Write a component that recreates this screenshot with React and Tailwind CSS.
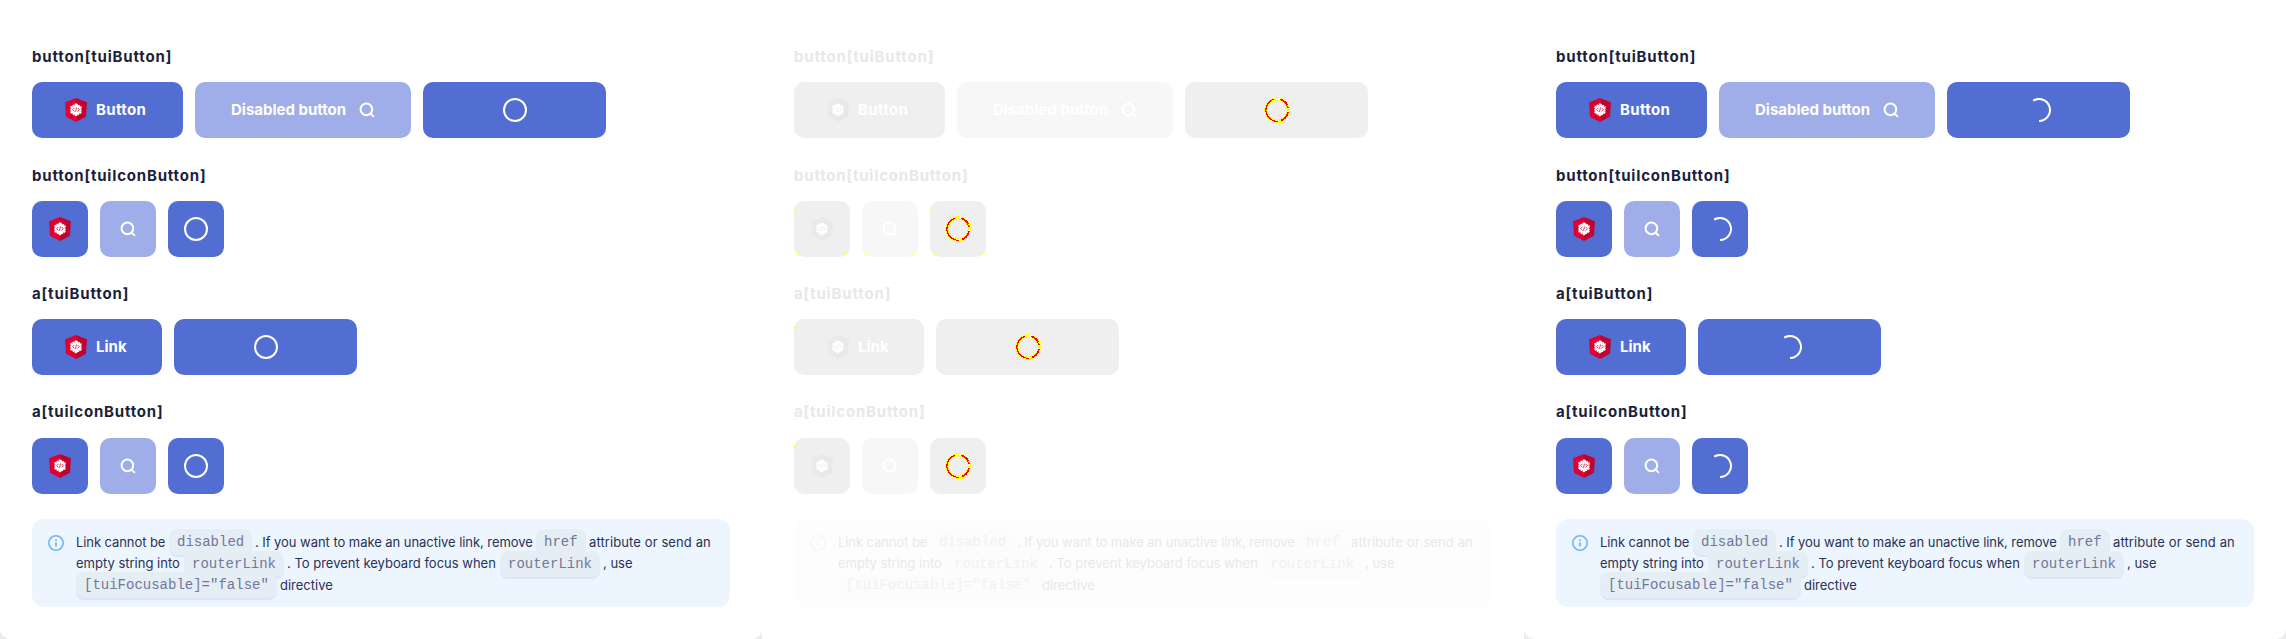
import React from "react";

const COLOR = {
  heading: "text-[#1b1f3b]",
  button: "bg-[#526ed3]",
  disabled: "bg-[#9faee8]",
  alert: "bg-[#edf6fe]",
  body: "text-[#2a3156]",
  code: "bg-[#e5edf5] text-[#71789a] shadow-[0_2px_0_#dbe6fd]",
  info: "#70b6f6",
  logoLeft: "#dd0031",
  logoRight: "#c3002f",
  logoMark: "#dd0031",
};

const GREY = {
  heading: "text-[#e8e8e8]",
  button: "bg-[#efefef]",
  disabled: "bg-[#f7f7f7]",
  alert: "bg-[#fdfdfd]",
  body: "text-[#e9e9e9]",
  code: "bg-[#fcfcfc] text-[#f1f1f1] shadow-[0_2px_0_#fbfbfb]",
  info: "#f6f6f6",
  logoLeft: "#eaeaea",
  logoRight: "#e8e8e8",
  logoMark: "#eaeaea",
};

function Logo({ c }) {
  return (
    <svg className="size-6 shrink-0" viewBox="0 0 24 24" fill="none">
      <path d="M12 0 1.1 4.2 2 18.8 12 24z" fill={c.logoLeft} />
      <path d="M12 0l10.9 4.2-.9 14.6L12 24z" fill={c.logoRight} />
      <path d="M12 6.3 16.6 8.9v5.6L12 17.3 7.4 14.5V8.9z" fill="#fff" stroke="#fff" strokeWidth="2" strokeDasharray="2 .6" />
      <path d="M10.4 9.9 8.6 11.7l1.8 1.8M13.6 9.9l1.8 1.8-1.8 1.8M12.5 9.6l-1 4.2" stroke={c.logoMark} strokeWidth=".8" />
    </svg>
  );
}

function Search() {
  return (
    <svg className="size-6 shrink-0" viewBox="0 0 24 24" fill="none" stroke="#fff" strokeWidth="2">
      <circle cx="11.4" cy="11.4" r="5.8" />
      <path d="M15.3 15.3 18.9 18.9" />
    </svg>
  );
}

function Loader({ kind }) {
  if (kind === "diff") {
    return (
      <svg className="size-7 shrink-0" viewBox="0 0 28 28" fill="none" shapeRendering="crispEdges">
        <circle cx="14" cy="14" r="11.2" stroke="#ffff00" strokeWidth="3" />
        <path d="M11 3.2A11.2 11.2 0 0 0 12 25" stroke="#ff0000" strokeWidth="1.3" />
        <path d="M12 25h4" stroke="#ff0000" strokeWidth="1" />
        <path d="M17.5 3.4A11.2 11.2 0 0 1 25 12" stroke="#ff0000" strokeWidth="1.8" />
        <path d="M24.9 16A11.2 11.2 0 0 1 18 24.5" stroke="#ff0000" strokeWidth="1.8" />
        <path d="M9 2h3M24 9h3M16 26h4" stroke="#ffff00" strokeWidth="1" />
        <path d="M12.5 3.2h1.5M15 3.2h2M25.2 12.4v1M25.2 14.6v1.2M14.5 24.8h1" stroke="#fff" strokeWidth="1.6" />
      </svg>
    );
  }
  return (
    <svg className="size-6 shrink-0" viewBox="0 0 24 24" fill="none" stroke="#fff" strokeWidth="2">
      {kind === "full" ? <circle cx="12" cy="12" r="11" /> : <path d="M6.2 2.65A11 11 0 1 1 12 23" />}
    </svg>
  );
}

const box = "flex h-14 shrink-0 items-center rounded-[10px] text-[15px] font-bold text-white";

function Speck({ at }) {
  return <i className={`absolute bg-[#ffff00] ${at}`} />;
}

function IconRow({ c, kind, bottomSpecks }) {
  const diff = kind === "diff";
  const bottom = diff && bottomSpecks && (
    <>
      <Speck at="bottom-[2px] left-[3px] h-px w-[2px]" />
      <Speck at="bottom-[2px] right-[3px] h-px w-[2px]" />
    </>
  );
  return (
    <div className="flex gap-3">
      <div className={`${box} ${c.button} relative w-14 justify-center`}>
        <Logo c={c} />
        {diff && <Speck at="left-0 top-2 h-[2px] w-px" />}
        {bottom}
      </div>
      <div className={`${box} ${c.disabled} relative w-14 justify-center`}>
        <Search />
        {bottom}
      </div>
      <div className={`${box} ${c.button} relative w-14 justify-center`}>
        <Loader kind={kind} />
        {diff && bottomSpecks && <Speck at="left-0 top-2 h-[2px] w-px" />}
        {bottom}
      </div>
    </div>
  );
}

function Section({ c, title, tracking, className, gap = "mb-[13px]", children }) {
  return (
    <section className={className}>
      <h3 className={`h-6 whitespace-nowrap text-[15px] font-bold leading-6 ${gap} ${tracking} ${c.heading}`}>{title}</h3>
      {children}
    </section>
  );
}

function Code({ c, className, children }) {
  return (
    <code
      className={`h-[26px] shrink-0 rounded-lg px-2 font-['Liberation_Mono',monospace] text-[14px] leading-[27px] ${c.code} ${className}`}
    >
      {children}
    </code>
  );
}

function Alert({ c }) {
  return (
    <div className={`mt-[25px] flex h-[88px] w-[698px] rounded-xl pl-4 text-[13px] leading-[26px] ${c.alert} ${c.body}`}>
      <svg className="mt-4 size-4 shrink-0" viewBox="0 0 16 16" fill="none">
        <circle cx="8" cy="8" r="7.2" stroke={c.info} strokeWidth="1.6" />
        <path d="M8 7.2v4.2M8 4.2v1.7" stroke={c.info} strokeWidth="1.7" />
      </svg>
      <div className="ml-3 mt-[10px] whitespace-nowrap">
        <div className="flex h-[22px] items-start">
          <span className="w-[93px] shrink-0 tracking-[-0.08px]">Link cannot be</span>
          <Code c={c} className="w-[83px]">disabled</Code>
          <span className="w-[284px] shrink-0 pl-[3px] tracking-[-0.05px]">. If you want to make an unactive link, remove</span>
          <Code c={c} className="w-[50px]">href</Code>
          <span className="pl-[3px] tracking-[0.1px]">attribute or send an</span>
        </div>
        <div className="flex h-[21px] items-start">
          <span className="w-[108px] shrink-0 leading-[25px]">empty string into</span>
          <Code c={c} className="w-[100px]">routerLink</Code>
          <span className="w-[216px] shrink-0 pl-[3px] leading-[25px]">. To prevent keyboard focus when</span>
          <Code c={c} className="w-[100px]">routerLink</Code>
          <span className="pl-[3px] leading-[25px]">, use</span>
        </div>
        <div className="flex h-[22px] items-start">
          <Code c={c} className="w-[201px]">[tuiFocusable]="false"</Code>
          <span className="pl-[3px] leading-[27px]">directive</span>
        </div>
      </div>
    </div>
  );
}

function Panel({ c, kind }) {
  const frame = kind === "diff" ? "bg-white" : "bg-[#ebebeb]";
  return (
    <div className={`h-[639px] w-[762px] shrink-0 ${frame}`}>
      <div className="h-full rounded-b-[10px] bg-white pl-8 pt-[45px]">
        <Section c={c} title="button[tuiButton]" tracking="tracking-[0.84px]">
          <div className="flex gap-3">
            <div className={`${box} ${c.button} w-[151px] gap-2 pl-8 tracking-[0.35px]`}>
              <Logo c={c} />
              Button
            </div>
            <div className={`${box} ${c.disabled} w-[216px] justify-between pl-9 pr-8`}>
              Disabled button
              <Search />
            </div>
            <div className={`${box} ${c.button} w-[183px] justify-center`}>
              <Loader kind={kind} />
            </div>
          </div>
        </Section>
        <Section c={c} title="button[tuiIconButton]" tracking="tracking-[0.8px]" className="mt-[26px]">
          <IconRow c={c} kind={kind} bottomSpecks />
        </Section>
        <Section c={c} title="a[tuiButton]" tracking="tracking-[0.85px]" className="mt-[25px]">
          <div className="flex gap-3">
            <div className={`${box} ${c.button} relative w-[130px] gap-2 pl-8`}>
              <Logo c={c} />
              Link
              {kind === "diff" && <Speck at="left-0 top-2 h-[2px] w-px" />}
            </div>
            <div className={`${box} ${c.button} w-[183px] justify-center`}>
              <Loader kind={kind} />
            </div>
          </div>
        </Section>
        <Section c={c} title="a[tuiIconButton]" tracking="tracking-[0.8px]" className="mt-[25px]" gap="mb-[14px]">
          <IconRow c={c} kind={kind} />
        </Section>
        <Alert c={c} />
      </div>
    </div>
  );
}

export default function App() {
  return (
    <main className="flex h-[639px] w-[2286px] overflow-hidden bg-white font-['Inter',sans-serif]">
      <Panel c={COLOR} kind="full" />
      <Panel c={GREY} kind="diff" />
      <Panel c={COLOR} kind="arc" />
    </main>
  );
}
